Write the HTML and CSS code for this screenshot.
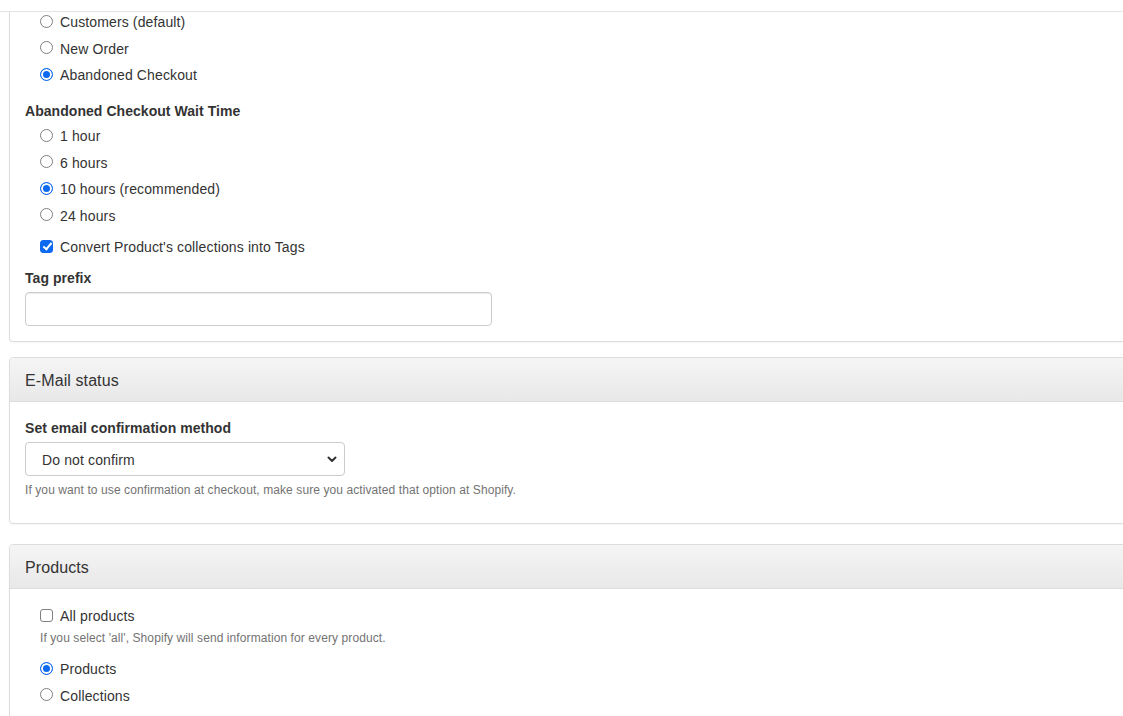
FILE: index.html
```
<!DOCTYPE html>
<html>
<head>
<meta charset="utf-8">
<link rel="stylesheet" href="styles.css">
</head>
<body>
<div class="topbar"></div>
<div class="page">
  <div class="panel panel-first">
    <div class="panel-body body-first">
      <div class="options">
        <label class="opt"><input type="radio" name="trigger"> Customers (default)</label>
        <label class="opt"><input type="radio" name="trigger"> New Order</label>
        <label class="opt"><input type="radio" name="trigger" checked> Abandoned Checkout</label>
      </div>
      <div class="field-label wait-label">Abandoned Checkout Wait Time</div>
      <div class="options wait-options">
        <label class="opt"><input type="radio" name="wait"> 1 hour</label>
        <label class="opt"><input type="radio" name="wait"> 6 hours</label>
        <label class="opt"><input type="radio" name="wait" checked> 10 hours (recommended)</label>
        <label class="opt"><input type="radio" name="wait"> 24 hours</label>
      </div>
      <div class="options convert">
        <label class="opt"><input type="checkbox" checked> Convert Product's collections into Tags</label>
      </div>
      <div class="field-label tag-label">Tag prefix</div>
      <input class="text-input" type="text">
    </div>
  </div>

  <div class="panel panel-email">
    <div class="panel-heading">E-Mail status</div>
    <div class="panel-body">
      <div class="field-label">Set email confirmation method</div>
      <div class="select-wrap">
        <select class="select">
          <option>Do not confirm</option>
        </select>
        <svg class="chev" width="10" height="7" viewBox="0 0 10 7"><path d="M1.5 1.5 L5 5 L8.5 1.5" fill="none" stroke="#333" stroke-width="2" stroke-linecap="round" stroke-linejoin="round"/></svg>
      </div>
      <div class="help">If you want to use confirmation at checkout, make sure you activated that option at Shopify.</div>
    </div>
  </div>

  <div class="panel panel-products">
    <div class="panel-heading">Products</div>
    <div class="panel-body body-products">
      <div class="options">
        <label class="opt"><input type="checkbox"> All products</label>
      </div>
      <div class="help help-indent">If you select 'all', Shopify will send information for every product.</div>
      <div class="options prod-options">
        <label class="opt"><input type="radio" name="prod" checked> Products</label>
        <label class="opt"><input type="radio" name="prod"> Collections</label>
      </div>
    </div>
  </div>
</div>
</body>
</html>
```

FILE: styles.css
```
html, body {
  margin: 0;
  padding: 0;
  background: #fff;
  overflow: hidden;
}
body {
  font-family: "Liberation Sans", Arial, sans-serif;
  font-size: 14px;
  line-height: 20px;
  color: #333;
  letter-spacing: 0.13px;
}
.topbar {
  position: fixed;
  top: 0;
  left: 0;
  right: 0;
  height: 11px;
  background: #fff;
  border-bottom: 1px solid #e3e3e3;
  z-index: 5;
}
.page {
  padding-left: 9px;
  width: 1150px;
}
.panel {
  border: 1px solid #dddddd;
  border-radius: 4px;
  background: #fff;
  box-shadow: 0 1px 2px rgba(0,0,0,0.04);
}
.panel-first {
  border-top: none;
  border-top-left-radius: 0;
  border-top-right-radius: 0;
  margin-bottom: 15px;
}
.panel-email {
  margin-bottom: 20px;
}
.panel-heading {
  padding: 11px 15px 9px;
  line-height: 23px;
  font-size: 16px;
  color: #333;
  letter-spacing: 0.1px;
  background: linear-gradient(to bottom, #f5f5f5 0%, #e8e8e8 100%);
  border-bottom: 1px solid #dddddd;
  border-top-left-radius: 3px;
  border-top-right-radius: 3px;
}
.panel-body {
  padding: 15px;
}
.body-first {
  padding-top: 11px;
}
.body-products {
  padding-top: 16px;
}
.options {
  padding-left: 15px;
}
.opt {
  display: flex;
  align-items: flex-start;
  box-sizing: border-box;
  height: 20px;
  padding-top: 1px;
  cursor: default;
}
.opt + .opt {
  margin-top: 6.5px;
}
.opt input {
  appearance: none;
  -webkit-appearance: none;
  margin: 2.5px 7px 0 0;
  width: 13px;
  height: 13px;
  flex: none;
  position: relative;
  background: #fff;
}
.opt input[type="radio"] {
  border: 1px solid #808080;
  border-radius: 50%;
}
.opt input[type="radio"]:checked {
  border-color: #0d6af0;
  background: #0d6af0;
  box-shadow: inset 0 0 0 2px #fff;
}
.opt input[type="checkbox"] {
  border: 1px solid #808080;
  border-radius: 3px;
}
.opt input[type="checkbox"]:checked {
  border-color: #0d6af0;
  background: #0d6af0;
}
.opt input[type="checkbox"]:checked::after {
  content: "";
  position: absolute;
  left: 3.5px;
  top: 0.5px;
  width: 3px;
  height: 7px;
  border: solid #fff;
  border-width: 0 2px 2px 0;
  transform: rotate(40deg);
}
.field-label {
  font-weight: bold;
  padding-top: 1px;
  margin-bottom: 4px;
  letter-spacing: 0.05px;
}
.wait-label {
  margin-top: 16px;
}
.convert {
  margin-top: 11.5px;
}
.tag-label {
  margin-top: 11px;
}
.text-input {
  display: block;
  box-sizing: border-box;
  width: 467px;
  height: 34px;
  margin: 0;
  padding: 6px 12px;
  border: 1px solid #cccccc;
  border-radius: 4px;
  box-shadow: inset 0 1px 1px rgba(0,0,0,0.075);
  font: inherit;
}
.select-wrap {
  position: relative;
  width: 320px;
}
.select {
  appearance: none;
  -webkit-appearance: none;
  display: block;
  box-sizing: border-box;
  width: 320px;
  height: 34px;
  margin: 0;
  padding: 1px 30px 0 16px;
  border: 1px solid #cccccc;
  border-radius: 4px;
  background: #fff;
  color: #333;
  font-family: "Liberation Sans", Arial, sans-serif;
  font-size: 14px;
  letter-spacing: 0.13px;
}
.chev {
  position: absolute;
  right: 8px;
  top: 14px;
}
.help {
  margin-top: 5px;
  padding-top: 1px;
  margin-bottom: 9px;
  font-size: 12px;
  line-height: 17px;
  color: #737373;
  letter-spacing: 0.09px;
}
.help-indent {
  margin-left: 15px;
  margin-top: 4px;
  margin-bottom: 0;
}
.prod-options {
  margin-top: 11px;
}
```
